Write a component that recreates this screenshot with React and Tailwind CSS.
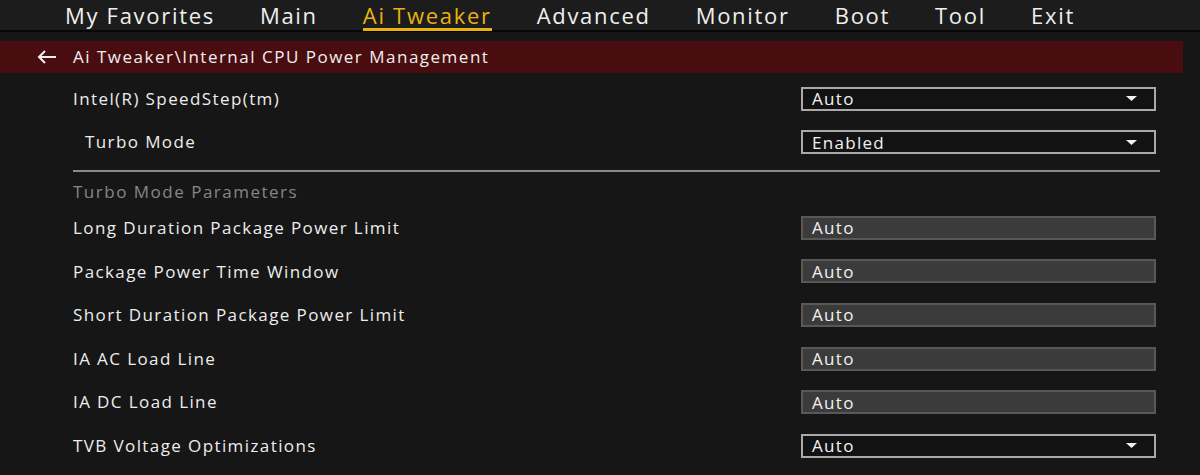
const TABS = [
  { label: 'My Favorites' },
  { label: 'Main' },
  { label: 'Ai Tweaker', active: true },
  { label: 'Advanced' },
  { label: 'Monitor' },
  { label: 'Boot' },
  { label: 'Tool' },
  { label: 'Exit' },
]

const PARAMS = [
  { label: 'Long Duration Package Power Limit', value: 'Auto' },
  { label: 'Package Power Time Window', value: 'Auto' },
  { label: 'Short Duration Package Power Limit', value: 'Auto' },
  { label: 'IA AC Load Line', value: 'Auto' },
  { label: 'IA DC Load Line', value: 'Auto' },
  { label: 'TVB Voltage Optimizations', value: 'Auto', select: true },
]

function Select({ value }) {
  return (
    <div className="w-[355px] h-[24px] border-2 border-[#a9a9a9] bg-[#121212] flex items-center pl-[9px] pr-[17px]">
      <span className="flex-1 text-[17px] font-medium leading-none text-[#f2f2f2] tracking-[1.3px]">{value}</span>
      <svg width="11" height="5" viewBox="0 0 11 5">
        <path d="M0 0h11L5.5 5z" fill="#f2f2f2" />
      </svg>
    </div>
  )
}

function Field({ value }) {
  return (
    <div className="w-[355px] h-[24px] border-2 border-[#585858] bg-[#3b3b3b] flex items-center pl-[9px]">
      <span className="text-[17px] font-medium leading-none text-[#f2f2f2] tracking-[1.3px]">{value}</span>
    </div>
  )
}

function Row({ label, indent, children, h = 'h-[43.6px]' }) {
  return (
    <div className={`flex items-center ${h}`}>
      <div className={`flex-1 text-[17px] font-medium text-[#ededed] tracking-[1.4px] ${indent ? 'pl-[85px]' : 'pl-[73px]'}`}>
        {label}
      </div>
      <div className="mr-[44px]">{children}</div>
    </div>
  )
}

export default function App() {
  return (
    <div className="w-[1200px] h-[475px] overflow-hidden bg-[#161616]" style={{ fontFamily: '"Open Sans", "Noto Sans", sans-serif' }}>
      {/* Top tabs */}
      <div className="h-[32px] bg-[#1c1c1c] border-b-2 border-[#060606] flex items-center pt-[2px]">
        {TABS.map((t, i) => (
          <div
            key={t.label}
            className={`text-[22px] font-medium leading-none tracking-[1.7px] pb-[2px] ${i === 0 ? 'ml-[65px]' : 'ml-[45px]'} ${
              t.active ? 'text-[#e9b30f] border-b-[3px] border-[#e9b30f] pt-[3px]' : 'text-[#efefef]'
            }`}
          >
            {t.label}
          </div>
        ))}
      </div>

      {/* Breadcrumb */}
      <div className="mt-[9px] mr-[17px] h-[32px] bg-[#4a0d0f] flex items-center">
        <svg className="ml-[37px]" width="20" height="14" viewBox="0 0 20 14" fill="none" stroke="#efefef" strokeWidth="2">
          <path d="M19 7H2M8 1L2 7l6 6" />
        </svg>
        <span className="ml-[16px] text-[17px] font-medium text-[#efefef] tracking-[1.5px]">Ai Tweaker\Internal CPU Power Management</span>
      </div>

      <div className="pt-[4px]">
        <Row label="Intel(R) SpeedStep(tm)" h="h-[43px]">
          <Select value="Auto" />
        </Row>
        <Row label="Turbo Mode" indent h="h-[44px]">
          <Select value="Enabled" />
        </Row>

        <div className="mt-[6px] ml-[73px] mr-[40px] h-[2px] bg-[#8a8a8a]" />
        <div className="pl-[73px] pt-[7px] h-[34px] text-[17px] font-medium text-[#868686] tracking-[1.5px]">Turbo Mode Parameters</div>

        {PARAMS.map((p) => (
          <Row key={p.label} label={p.label}>
            {p.select ? <Select value={p.value} /> : <Field value={p.value} />}
          </Row>
        ))}
      </div>
    </div>
  )
}
